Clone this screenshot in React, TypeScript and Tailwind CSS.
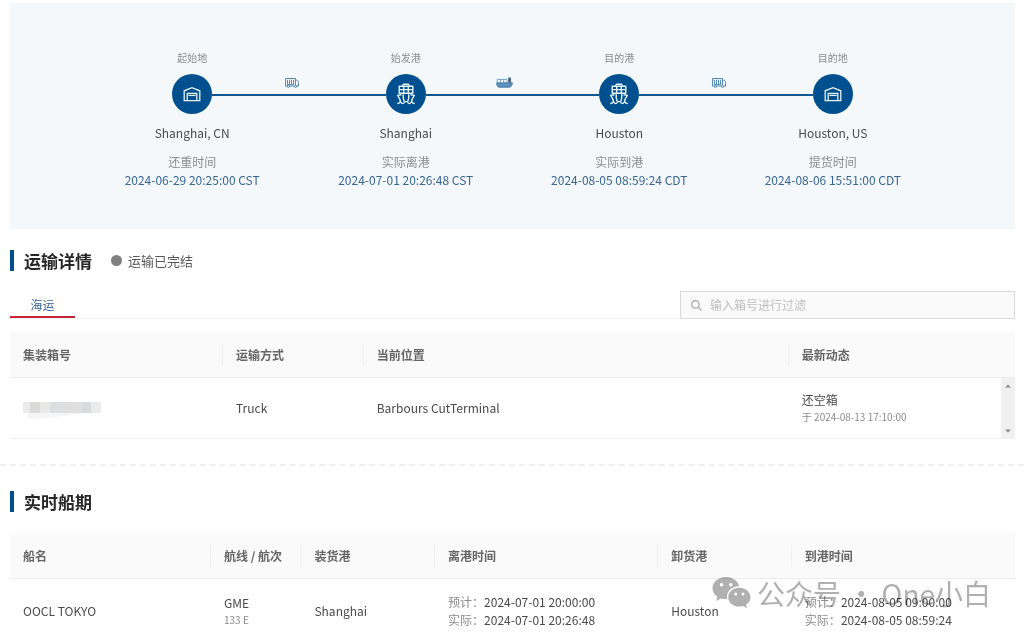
import type { ReactNode } from "react";

const FONT = "font-['Noto_Sans_CJK_SC',sans-serif]";

interface Stop {
  role: string;
  kind: "depot" | "port";
  place: string;
  event: string;
  time: string;
  next?: "truck" | "vessel";
}

const stops: Stop[] = [
  { role: "起始地", kind: "depot", place: "Shanghai, CN", event: "还重时间", time: "2024-06-29 20:25:00 CST", next: "truck" },
  { role: "始发港", kind: "port", place: "Shanghai", event: "实际离港", time: "2024-07-01 20:26:48 CST", next: "vessel" },
  { role: "目的港", kind: "port", place: "Houston", event: "实际到港", time: "2024-08-05 08:59:24 CDT", next: "truck" },
  { role: "目的地", kind: "depot", place: "Houston, US", event: "提货时间", time: "2024-08-06 15:51:00 CDT" },
];

function DepotIcon() {
  return (
    <svg width="18" height="16" viewBox="0 0 18 16" fill="none" stroke="#e6f3fb" strokeWidth="1.3" aria-hidden="true">
      <path d="M1.2 14.6V4.8L9 1.6l7.8 3.2v9.8H1.2Z" />
      <path d="M4.2 14.4V7.4h9.6v7M5.4 9.4h7.2" />
    </svg>
  );
}

function PortIcon() {
  return (
    <svg width="20" height="22" viewBox="0 0 20 22" fill="none" stroke="#e6f3fb" strokeWidth="1.4" strokeLinejoin="round" aria-hidden="true">
      <path d="M6.4 2.8 7.6 1.2h4.8l1.2 1.6" />
      <path d="M3.2 3.2h13.600v7H3.200ZM3.200 6.600h13.600M7.700 3.200v7M12.300 3.200v7" />
      <path d="M4.400 18.600c0-2.200-1.200-4-2.800-6.200l3.800-.6M15.600 18.600c0-2.200 1.200-4 2.800-6.200l-3.800-.6" />
      <path d="M7.200 11.200c-.2 3 .2 5.200 1 7.400M12.800 11.200c.2 3-.2 5.200-1 7.400" />
      <path d="M1.200 20.600c1.600 0 2.400-.6 3.200-2 .8 1.200 1.400 2 2.400 2s1.400-.8 1.800-2h2.800c.4 1.200.8 2 1.800 2s1.600-.8 2.400-2c.8 1.400 1.600 2 3.200 2" />
    </svg>
  );
}

function TruckIcon() {
  return (
    <svg width="14" height="10" viewBox="0 0 14 10" fill="none" stroke="#4580ad" strokeWidth="0.9" aria-hidden="true">
      <path d="M.5.5h10v7.600H.5ZM2.500 1.800v4.800M4.500 1.800v4.800M6.500 1.800v4.800M8.500 1.800v4.800M2 6.700h7" />
      <path d="M10.500 2.200h1.200c1.200 0 1.800 1 1.800 2.400v3.500h-3" />
      <circle cx="3.4" cy="8.4" r="1.1" fill="#f4f8fb" />
      <circle cx="10.6" cy="8.4" r="1.1" fill="#f4f8fb" />
    </svg>
  );
}

function VesselIcon() {
  return (
    <svg width="17" height="11" viewBox="0 0 17 11" aria-hidden="true">
      <path d="M.6 5.800h15.800c-.4 2.600-1.400 4.400-3 4.400H3C1.600 10.200.8 8.400.6 5.800Z" fill="#5f93bd" stroke="#34699a" strokeWidth="0.8" />
      <path d="M1.200 5.400V2.400h9.800v3M4.400 2.400v3M7.700 2.400v3" fill="none" stroke="#6ea4cc" strokeWidth="1" />
      <path d="M12.200 5.600V.6h2.800v5Z" fill="#44607e" />
    </svg>
  );
}

function Timeline() {
  return (
    <section className="bg-[#f4f8fb] pt-[47px] pb-10">
      <ol className="mx-auto grid w-[85%] grid-cols-4">
        {stops.map((stop, i) => (
          <li key={stop.role} className="flex flex-col items-center text-xs">
            <span className="text-[10px] leading-4 text-[#8c8c8c]">{stop.role}</span>
            <div className="mt-2 flex w-full">
              <div className={`h-[22px] flex-1 ${i > 0 ? "border-b-2 border-[#0f5590]" : ""}`} />
              <div className="flex size-10 items-center justify-center rounded-full bg-[#00508f]">
                {stop.kind === "depot" ? <DepotIcon /> : <PortIcon />}
              </div>
              <div
                className={`flex h-[22px] flex-1 items-end justify-end pb-1.5 ${stop.next ? "border-b-2 border-[#0f5590]" : ""}`}
              >
                {stop.next === "truck" && <TruckIcon />}
                {stop.next === "vessel" && <VesselIcon />}
              </div>
            </div>
            <span className="mt-[9px] leading-5 text-[#4a4a4a]">{stop.place}</span>
            <span className="mt-[10px] leading-[18px] text-[#8c8c8c]">{stop.event}</span>
            <time className="leading-[18px] whitespace-nowrap text-[#376596]">{stop.time}</time>
          </li>
        ))}
      </ol>
    </section>
  );
}

function SectionTitle({ children }: { children: ReactNode }) {
  return (
    <h2 className="border-l-4 border-[#00508f] pl-[10px] text-[17px] leading-[21px] font-bold text-[#262626]">
      {children}
    </h2>
  );
}

function HeadCell({ children, width, last }: { children: ReactNode; width?: string; last?: boolean }) {
  return (
    <th scope="col" className={`h-[46px] border-b border-[#ececec] bg-[#fafafa] p-0 text-left font-bold text-[#666666] ${width ?? ""}`}>
      <div className={`pl-[13px] leading-[22px] whitespace-nowrap ${last ? "" : "border-r border-[#f0f0f0]"}`}>{children}</div>
    </th>
  );
}

// Blurred-out container number
function MaskedNumber() {
  return (
    <svg width="78" height="24" viewBox="0 0 78 24" className="block" role="img" aria-label="集装箱号">
      <rect y="6" width="7" height="11" fill="#ebebeb" />
      <rect x="7" y="6" width="10" height="11" fill="#dadada" />
      <rect x="17" y="6" width="10" height="11" fill="#e8e8e6" />
      <rect x="27" y="6" width="11" height="11" fill="#dcdee0" />
      <rect x="38" y="6" width="11" height="11" fill="#dedede" />
      <rect x="49" y="6" width="10" height="11" fill="#e0e0e0" />
      <rect x="59" y="6" width="9" height="11" fill="#d8dadc" />
      <rect x="68" y="6" width="10" height="11" fill="#ebebeb" />
      <path d="M4 17h62L24 22l-18 1Z" fill="#f5f5f5" />
    </svg>
  );
}

function ContainerTable() {
  return (
    <div className="relative">
      <table className="w-full table-fixed border-separate border-spacing-0 text-xs text-[#4a4a4a]">
        <thead>
          <tr>
            <HeadCell width="w-[21.2%]">集装箱号</HeadCell>
            <HeadCell width="w-[14%]">运输方式</HeadCell>
            <HeadCell width="w-[42.3%]">当前位置</HeadCell>
            <HeadCell last>最新动态</HeadCell>
          </tr>
        </thead>
        <tbody>
          <tr className="h-[61px] *:border-b *:border-[#f0f0f0] *:pl-[13px]">
            <td>
              <MaskedNumber />
            </td>
            <td>Truck</td>
            <td>Barbours CutTerminal</td>
            <td>
              <p className="leading-[18px]">还空箱</p>
              <p className="text-[10px] leading-4 text-[#8c8c8c]">于 2024-08-13 17:10:00</p>
            </td>
          </tr>
        </tbody>
      </table>
      {/* Scroll track */}
      <div className="absolute right-0 bottom-0 flex h-[61px] w-[14px] flex-col items-center justify-between bg-[#f0f0f0] py-1.5" aria-hidden="true">
        <svg width="6" height="4" viewBox="0 0 6 4" fill="#8a8a8a"><path d="M0 3.5 3 .5l3 3Z" /></svg>
        <svg width="6" height="4" viewBox="0 0 6 4" fill="#8a8a8a"><path d="M0 .5l3 3 3-3Z" /></svg>
      </div>
    </div>
  );
}

function PortTimes({ planned, actual }: { planned: string; actual: string }) {
  return (
    <>
      <p className="leading-[18px]"><span className="text-[#8c8c8c]">预计：</span>{planned}</p>
      <p className="leading-[18px]"><span className="text-[#8c8c8c]">实际：</span>{actual}</p>
    </>
  );
}

function ScheduleTable() {
  return (
    <table className="w-full table-fixed border-separate border-spacing-0 text-xs text-[#4a4a4a]">
      <thead>
        <tr>
          <HeadCell width="w-[20%]">船名</HeadCell>
          <HeadCell width="w-[9%]">航线 / 航次</HeadCell>
          <HeadCell width="w-[13.3%]">装货港</HeadCell>
          <HeadCell width="w-[22.2%]">离港时间</HeadCell>
          <HeadCell width="w-[13.3%]">卸货港</HeadCell>
          <HeadCell last>到港时间</HeadCell>
        </tr>
      </thead>
      <tbody>
        <tr className="h-16 whitespace-nowrap *:pl-[13px]">
          <td>OOCL TOKYO</td>
          <td>
            <p className="leading-[18px]">GME</p>
            <p className="text-[10px] leading-4 text-[#8c8c8c]">133 E</p>
          </td>
          <td>Shanghai</td>
          <td><PortTimes planned="2024-07-01 20:00:00" actual="2024-07-01 20:26:48" /></td>
          <td>Houston</td>
          <td><PortTimes planned="2024-08-05 09:00:00" actual="2024-08-05 08:59:24" /></td>
        </tr>
      </tbody>
    </table>
  );
}

function Watermark() {
  return (
    <div className="pointer-events-none absolute top-[43px] right-6 flex items-center gap-1.5 text-[#b0b0b0] mix-blend-multiply">
      <svg width="39" height="34" viewBox="0 0 39 34" fill="currentColor" aria-hidden="true">
        <path
          fillRule="evenodd"
          d="M14 1C6.5 1 .5 6 .5 12.300c0 3.500 1.900 6.500 4.900 8.600L4.200 25l4.700-2.500c1.900.6 4.200.9 6.500.8-.3-1-.4-1.900-.4-2.700 0-5.800 5.300-10.400 12.200-10.400C26 5 20.500 1 14 1ZM9.600 6.900a1.800 1.800 0 1 1 0 3.600 1.800 1.800 0 0 1 0-3.600Zm9.200 0a1.800 1.800 0 1 1 0 3.600 1.800 1.800 0 0 1 0-3.600Z"
        />
        <path
          fillRule="evenodd"
          d="M27.300 11.800c-6.200 0-11.100 4.200-11.100 9.400s4.900 9.400 11.100 9.400c1.300 0 2.600-.2 3.800-.6l3.900 2.200-1-3.500c2.800-1.800 4.500-4.500 4.500-7.500 0-5.200-5-9.400-11.200-9.400Zm-3.600 4.700a1.500 1.500 0 1 1 0 3 1.500 1.500 0 0 1 0-3Zm7.300 0a1.500 1.500 0 1 1 0 3 1.500 1.500 0 0 1 0-3Z"
        />
      </svg>
      <span className="text-[28px] leading-8 whitespace-nowrap">公众号 · One小白</span>
    </div>
  );
}

export default function App() {
  return (
    <main className={`bg-white pt-[3px] ${FONT}`}>
      <div className="mr-[9px] ml-[10px]">
        <Timeline />
        <div className="mt-[21px] flex items-center gap-[19px]">
          <SectionTitle>运输详情</SectionTitle>
          <p className="flex items-center gap-1.5 text-[13px] leading-5 text-[#595959]">
            <span className="size-[11px] rounded-full bg-[#808080]" />
            运输已完结
          </p>
        </div>
        <div className="mt-5 flex items-end justify-between border-b border-[#f0f0f0]">
          <button type="button" className="w-[65px] border-b-2 border-[#c8253c] pb-0.5 text-xs leading-[18px] text-[#376596]">
            海运
          </button>
          <label className="-mb-px flex h-7 w-1/3 items-center gap-2 border border-[#d9d9d9] bg-[#fafafa] px-[10px]">
            <svg width="11" height="11" viewBox="0 0 11 11" fill="none" stroke="#a6a6a6" strokeWidth="1.2" aria-hidden="true">
              <circle cx="4.4" cy="4.4" r="3.7" />
              <path d="m7.2 7.2 3.3 3.3" />
            </svg>
            <input
              type="text"
              aria-label="输入箱号进行过滤"
              placeholder="输入箱号进行过滤"
              className="min-w-0 flex-1 bg-transparent text-xs outline-none placeholder:text-[#bfbfbf]"
            />
          </label>
        </div>
        <div className="mt-[13px]">
          <ContainerTable />
        </div>
      </div>
      <hr className="mt-[25px] border-t-2 border-dashed border-[#f0f0f0]" />
      <section className="mt-[25px] mr-[9px] ml-[10px]">
        <SectionTitle>实时船期</SectionTitle>
        <div className="relative mt-[21px]">
          <ScheduleTable />
          <Watermark />
        </div>
      </section>
    </main>
  );
}
